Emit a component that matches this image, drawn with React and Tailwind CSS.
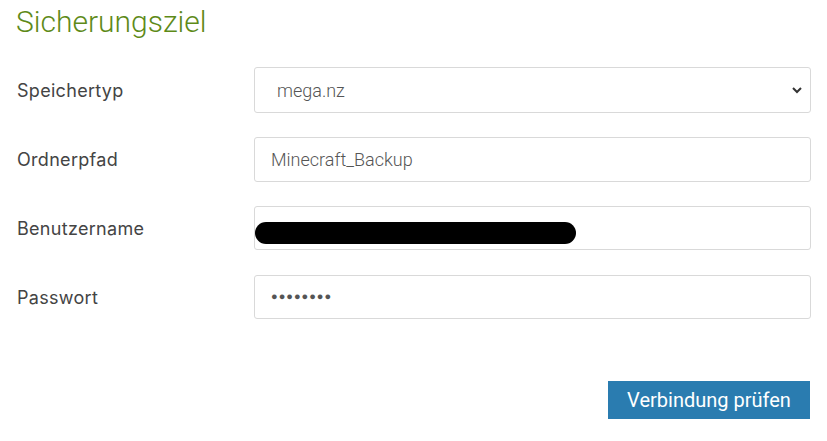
export default function App() {
  const rowLabel = "w-[254px] shrink-0 pl-[17px] text-[18px] tracking-[0.3px] text-[#444] font-['Inter',sans-serif]";
  const box = "flex-1 h-full border border-[#d9d9d9] rounded-[3px] bg-white flex items-center";
  return (
    <div className="w-[827px] h-[441px] bg-white font-['Roboto',sans-serif] relative overflow-hidden">
      <div className="pl-[16px] pt-[2px] text-[30px] leading-[40px] text-[#5e8a18] font-light">Sicherungsziel</div>
      <div className="mt-[25px] flex flex-col gap-[24px] pr-[16px]">
        <div className="flex items-center h-[46px]">
          <div className={rowLabel}>Speichertyp</div>
          <div className={box + " justify-between pl-[22px] pr-[6px]"}>
            <span className="text-[18px] text-[#555] font-light">mega.nz</span>
            <svg width="12" height="12" viewBox="0 0 12 12" className="mr-[1px]">
              <path d="M2 4 L6 8 L10 4" fill="none" stroke="#333" strokeWidth="2" />
            </svg>
          </div>
        </div>
        <div className="flex items-center h-[45px]">
          <div className={rowLabel}>Ordnerpfad</div>
          <div className={box + " pl-[16px]"}>
            <span className="text-[18px] text-[#555] font-light">Minecraft_Backup</span>
          </div>
        </div>
        <div className="flex items-center h-[44px]">
          <div className={rowLabel}>Benutzername</div>
          <div className={box + " relative"}>
            <div className="absolute left-0 top-[15px] w-[321px] h-[22px] rounded-full bg-black" />
          </div>
        </div>
        <div className="flex items-center h-[44px] mt-[1px]">
          <div className={rowLabel}>Passwort</div>
          <div className={box + " pl-[16px]"}>
            <span className="text-[11px] tracking-[1px] text-[#555]">●●●●●●●●</span>
          </div>
        </div>
      </div>
      <div className="flex justify-end pr-[17px] mt-[62px]">
        <button className="w-[202px] h-[38px] bg-[#2a7cb0] text-white text-[20px] font-['Roboto',sans-serif]">Verbindung prüfen</button>
      </div>
    </div>
  );
}
